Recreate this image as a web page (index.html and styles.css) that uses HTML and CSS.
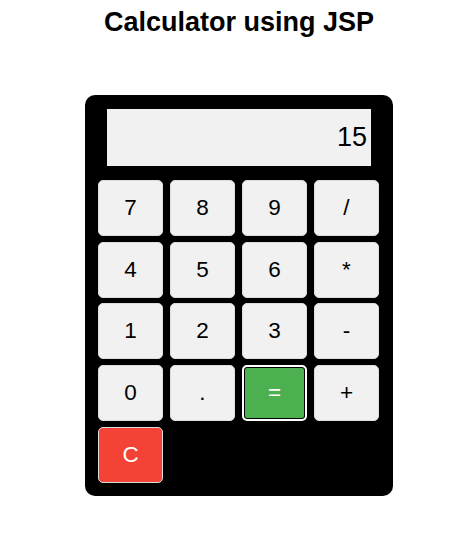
FILE: index.html
```html
<!DOCTYPE html>
<html>
<head>
<meta charset="utf-8">
<title>Calculator using JSP</title>
<link rel="stylesheet" href="styles.css">
</head>
<body>
<h1 class="title">Calculator using JSP</h1>
<div class="calc">
  <div class="display">15</div>
  <div class="keys">
    <button class="key">7</button>
    <button class="key">8</button>
    <button class="key">9</button>
    <button class="key">/</button>
    <button class="key">4</button>
    <button class="key">5</button>
    <button class="key">6</button>
    <button class="key">*</button>
    <button class="key">1</button>
    <button class="key">2</button>
    <button class="key">3</button>
    <button class="key">-</button>
    <button class="key">0</button>
    <button class="key">.</button>
    <button class="key key-eq">=</button>
    <button class="key">+</button>
    <button class="key key-clear">C</button>
  </div>
</div>
</body>
</html>
```
FILE: styles.css
```css
html, body {
  margin: 0;
  padding: 0;
  background: #fff;
  font-family: "Liberation Sans", Arial, sans-serif;
}
body {
  padding: 7px 0 0 2px;
}
.title {
  margin: 0;
  text-align: center;
  font-size: 27px;
  font-weight: bold;
  line-height: 31px;
  color: #000;
}
.calc {
  width: 308px;
  box-sizing: border-box;
  margin: 57px auto 0;
  background: #000;
  border-radius: 10px;
  padding: 14px 14px 13px 13px;
}
.display {
  margin: 0 8px 0 9px;
  height: 57px;
  background: #f1f1f1;
  color: #000;
  font-size: 27px;
  text-align: right;
  padding-right: 4px;
  line-height: 57px;
}
.keys {
  margin-top: 14px;
  display: grid;
  grid-template-columns: repeat(4, 65px);
  grid-auto-rows: 56px;
  column-gap: 7px;
  row-gap: 5.7px;
}
.key {
  font-family: "Liberation Sans", Arial, sans-serif;
  font-size: 22.5px;
  color: #000;
  background: #f1f1f1;
  border: 1px solid #ddd;
  border-radius: 5px;
  padding: 0;
  margin: 0;
}
.key-eq {
  background: #4caf50;
  color: #fff;
  border: 2px solid #fff;
  box-shadow: inset 0 0 0 1px #000;
}
.key-clear {
  background: #f44336;
  color: #fff;
  border: 1px solid #ddd;
}
```
